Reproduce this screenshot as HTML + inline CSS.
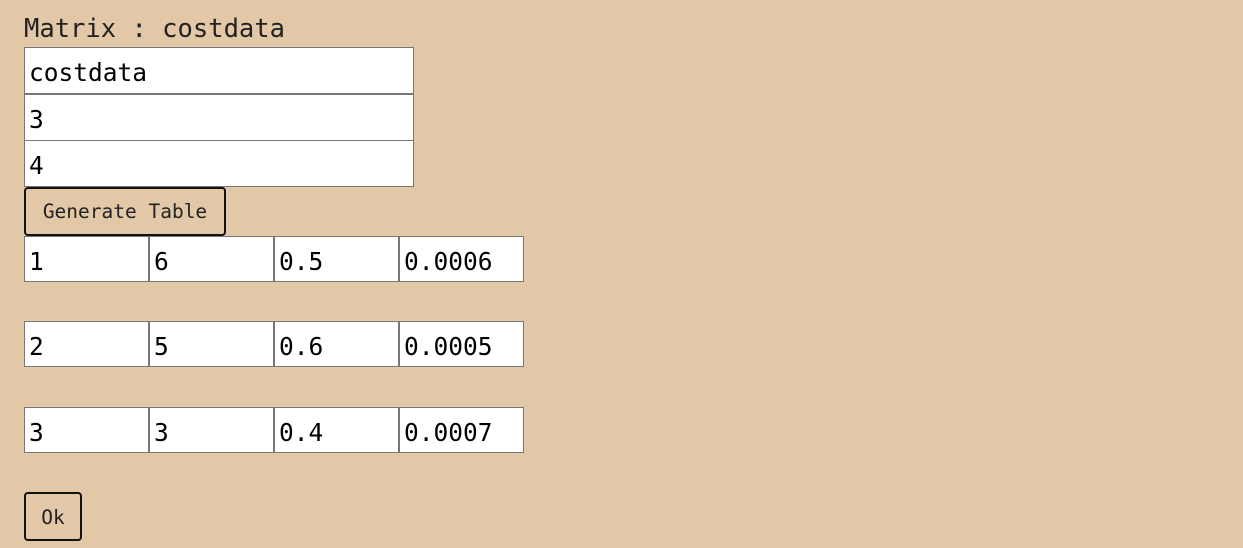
<!DOCTYPE html>
<html><head><style>
body{margin:0;background:#e2c8a6;width:1243px;height:548px;position:relative;overflow:hidden;font-family:"DejaVu Sans Mono","Liberation Mono",monospace;}
.a{position:absolute;box-sizing:border-box;}
.t{left:24px;top:12px;font-size:25.5px;color:#222;line-height:34px;}
.i{background:#fff;border:1px solid #767676;font-size:24.5px;color:#000;padding-left:4px;padding-top:3px;line-height:44px;white-space:nowrap;}
.b{border:2px solid #111;border-radius:4px;font-size:19.5px;color:#222;text-align:center;}
</style></head><body>
<div class="a t">Matrix : costdata</div>
<div class="a i" style="left:24px;top:47px;width:390px;height:47px">costdata</div>
<div class="a i" style="left:24px;top:94px;width:390px;height:47px">3</div>
<div class="a i" style="left:24px;top:140px;width:390px;height:47px">4</div>
<div class="a b" style="left:24px;top:187px;width:202px;height:49px;line-height:45px">Generate Table</div>

<div class="a i" style="left:24px;top:236px;width:125px;height:46px">1</div>
<div class="a i" style="left:149px;top:236px;width:125px;height:46px">6</div>
<div class="a i" style="left:274px;top:236px;width:125px;height:46px">0.5</div>
<div class="a i" style="left:399px;top:236px;width:125px;height:46px">0.0006</div>

<div class="a i" style="left:24px;top:321px;width:125px;height:46px">2</div>
<div class="a i" style="left:149px;top:321px;width:125px;height:46px">5</div>
<div class="a i" style="left:274px;top:321px;width:125px;height:46px">0.6</div>
<div class="a i" style="left:399px;top:321px;width:125px;height:46px">0.0005</div>

<div class="a i" style="left:24px;top:407px;width:125px;height:46px">3</div>
<div class="a i" style="left:149px;top:407px;width:125px;height:46px">3</div>
<div class="a i" style="left:274px;top:407px;width:125px;height:46px">0.4</div>
<div class="a i" style="left:399px;top:407px;width:125px;height:46px">0.0007</div>

<div class="a b" style="left:24px;top:492px;width:58px;height:49px;line-height:47px">Ok</div>
</body></html>
